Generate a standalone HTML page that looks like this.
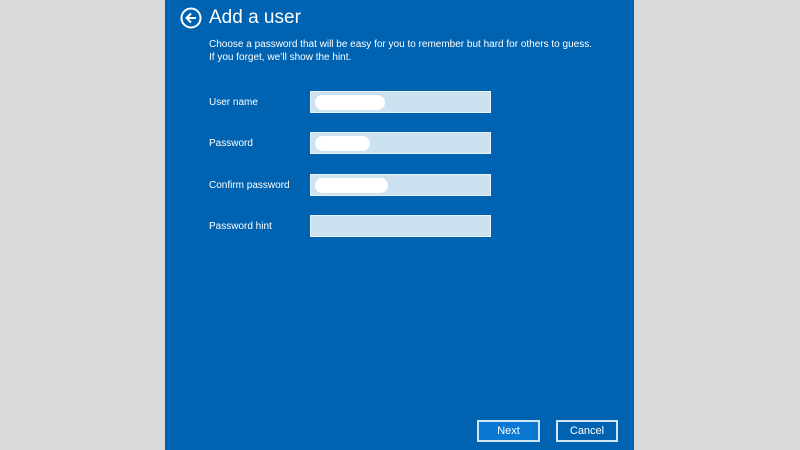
<!DOCTYPE html>
<html><head><meta charset="utf-8"><style>
*{margin:0;padding:0;box-sizing:border-box}
body{width:800px;height:450px;background:#d9d9d9;position:relative;overflow:hidden;font-family:"Liberation Sans","DejaVu Sans",sans-serif;color:#fff}
.panel{position:absolute;left:165px;top:0;width:469px;height:450px;background:#0063b1}
.t{position:absolute;white-space:nowrap}
.in{position:absolute;left:310px;width:181px;height:22px;background:#cde2f1;border:1px solid #e6f1f9}
.blob{position:absolute;left:4px;top:3px;height:15px;background:#fff;border-radius:8px}
.lbl{position:absolute;left:209px;font-size:10px}
.btn{position:absolute;top:420px;height:22px;border:2px solid #cfe6f5;font-size:11px;text-align:center;line-height:18px}
</style></head><body>
<div class="panel"></div>
<svg style="position:absolute;left:180px;top:7px" width="22" height="22" viewBox="0 0 22 22"><circle cx="11" cy="11" r="9.5" fill="none" stroke="#fff" stroke-width="2"/><path d="M16 11H7M11 6.5L6.5 11L11 15.5" fill="none" stroke="#fff" stroke-width="2"/></svg>
<div class="t" style="left:209px;top:7px;font-size:19px">Add a user</div>
<div class="t" style="left:209px;top:38px;font-size:10px;line-height:13px">Choose a password that will be easy for you to remember but hard for others to guess.<br>If you forget, we’ll show the hint.</div>
<div class="lbl" style="top:97px">User name</div>
<div class="lbl" style="top:138px">Password</div>
<div class="lbl" style="top:180px">Confirm password</div>
<div class="lbl" style="top:221px">Password hint</div>
<div class="in" style="top:91px"><div class="blob" style="width:70px"></div></div>
<div class="in" style="top:132px"><div class="blob" style="width:55px"></div></div>
<div class="in" style="top:174px"><div class="blob" style="width:73px"></div></div>
<div class="in" style="top:215px"></div>
<div class="btn" style="left:477px;width:63px;background:#0a78d2">Next</div>
<div class="btn" style="left:556px;width:62px;background:#0063b1">Cancel</div>
</body></html>
